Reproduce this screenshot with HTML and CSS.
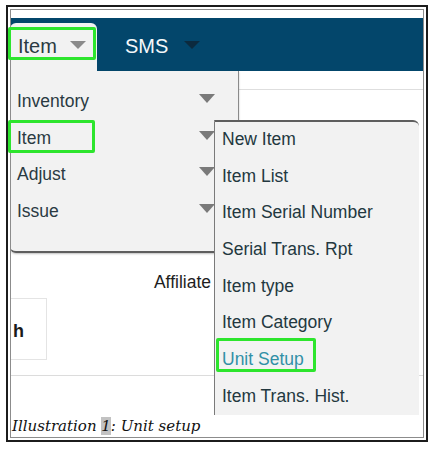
FILE: index.html
```html
<!DOCTYPE html>
<html>
  <head>
    <meta name="viewport" content="width=device-width, initial-scale=1.0">
    <link rel="stylesheet" href="styles.css">
  </head>
  <body>
    <div class="figure">
      <div class="inner">
        <div class="shot">
          <div class="top-strip"></div>
          <div class="navbar">
            <div class="nav-tab">Item <span class="nav-caret light"></span></div>
            <div class="nav-link">SMS <span class="nav-caret dark"></span></div>
          </div>
          <div class="toolbar"></div>
          <div class="form-row">
            <div class="label">Affiliate</div>
          </div>
          <div class="search-box"><b>h</b></div>
          <div class="divider"></div>

          <!-- dropdown opened from the Item tab -->
          <div class="dropdown">
            <div class="menu-row">Inventory <span class="caret"></span></div>
            <div class="menu-row">Item <span class="caret"></span></div>
            <div class="menu-row">Adjust <span class="caret"></span></div>
            <div class="menu-row">Issue <span class="caret"></span></div>
          </div>

          <!-- submenu of Item -->
          <div class="submenu">
            <div class="sub-row">New Item</div>
            <div class="sub-row">Item List</div>
            <div class="sub-row">Item Serial Number</div>
            <div class="sub-row">Serial Trans. Rpt</div>
            <div class="sub-row">Item type</div>
            <div class="sub-row">Item Category</div>
            <div class="sub-row active">Unit Setup</div>
            <div class="sub-row">Item Trans. Hist.</div>
          </div>
        </div>
        <div class="caption">Illustration <span class="num">1</span>: Unit setup</div>
      </div>

      <!-- green annotation boxes -->
      <div class="mark mark-tab"></div>
      <div class="mark mark-item"></div>
      <div class="mark mark-unit"></div>
    </div>
  </body>
</html>
```

FILE: styles.css
```css
/* Page */
body {
  margin: 0;
  background-color: #ffffff;
  font-family: "Liberation Sans", Arial, sans-serif;
}

/* Figure frame */
.figure {
  position: relative;
  width: 414px;
  margin: 5px 0 0 6px;
  border: 2px solid #1c1c1c;
  padding: 2px;
}

.inner {
  border: 1px solid #8c8c8c;
}

.shot {
  position: relative;
  height: 405px;
  overflow: hidden;
  background-color: #ffffff;
}

.top-strip {
  height: 8px;
  background-color: #ffffff;
}

/* Navigation bar */
.navbar {
  height: 53px;
  background-color: #03466b;
  display: flex;
  align-items: flex-start;
  font-size: 20px;
  line-height: 20px;
}

.nav-tab {
  width: 79px;
  height: 35px;
  margin-top: 5px;
  margin-left: -1px;
  padding: 13px 0 0 8px;
  background-color: #f2f2f2;
  border-radius: 6px 6px 0 0;
  color: #2a3a42;
  position: relative;
  z-index: 2;
}

.nav-link {
  margin-left: 28px;
  padding-top: 18px;
  color: #f4f8fa;
}

.nav-caret {
  display: inline-block;
  width: 0;
  height: 0;
  margin-left: 8px;
  vertical-align: 4px;
  border-left: 8px solid transparent;
  border-right: 8px solid transparent;
  border-top: 8px solid #8a8a8a;
}

.nav-caret.dark {
  margin-left: 10px;
  border-top-color: #0c2a3e;
}

/* Page behind the menus */
.toolbar {
  height: 18px;
  border-bottom: 1px solid #dedede;
}

.form-row {
  margin-top: 182px;
  display: flex;
  font-size: 17.5px;
  line-height: 20px;
  color: #1e1e1e;
}

.label {
  width: 200px;
  text-align: right;
}

.search-box {
  width: 35px;
  height: 60px;
  margin: 6px 0 0 -1px;
  border: 1px solid #e4e4e4;
  box-sizing: content-box;
  font-size: 18px;
  line-height: 20px;
  color: #1a1a1a;
}

.search-box b {
  display: block;
  padding: 22px 0 0 2px;
}

.divider {
  margin-top: 15px;
  border-top: 1px solid #dcdcdc;
}

/* Dropdown */
.dropdown {
  position: absolute;
  top: 61px;
  left: -1px;
  width: 198px;
  height: 168px;
  padding: 12px 23px 0 7px;
  background-color: #f2f2f2;
  border-right: 1px solid #8a8a8a;
  border-bottom: 2px solid #5e5e5e;
  border-bottom-left-radius: 6px;
  box-shadow: 0 1px 2px rgba(0, 0, 0, 0.25);
  z-index: 1;
}

.menu-row {
  display: flex;
  justify-content: space-between;
  align-items: center;
  height: 36.7px;
  font-size: 17.5px;
  color: #2a3a42;
}

.caret {
  width: 0;
  height: 0;
  margin-bottom: 6px;
  border-left: 8.5px solid transparent;
  border-right: 8.5px solid transparent;
  border-top: 9px solid #7a7a7a;
}

/* Submenu */
.submenu {
  position: absolute;
  top: 110px;
  left: 203px;
  width: 197px;
  height: 320px;
  padding-left: 7px;
  background-color: #f2f2f2;
  border-top: 2px solid #5e5e5e;
  border-left: 1px solid #7a7a7a;
  border-top-right-radius: 6px;
  z-index: 3;
}

.sub-row {
  height: 36.7px;
  line-height: 36.7px;
  margin-top: -1px;
  margin-bottom: 1px;
  font-size: 17.5px;
  color: #23383f;
  white-space: nowrap;
}

.sub-row.active {
  color: #3190a6;
}

/* Caption */
.caption {
  height: 22px;
  padding-left: 1px;
  font-family: "DejaVu Serif", "Liberation Serif", serif;
  font-style: italic;
  font-size: 15px;
  line-height: 22px;
  color: #111111;
  background-color: #ffffff;
}

.num {
  background-color: #c2c2c2;
}

/* Annotation boxes */
.mark {
  position: absolute;
  border: 3px solid #2de52d;
  border-radius: 2px;
  z-index: 5;
}

.mark-tab {
  left: 0;
  top: 20px;
  width: 82px;
  height: 27px;
}

.mark-item {
  left: 0;
  top: 113px;
  width: 81px;
  height: 27px;
}

.mark-unit {
  left: 208px;
  top: 331px;
  width: 94px;
  height: 28px;
}
```
